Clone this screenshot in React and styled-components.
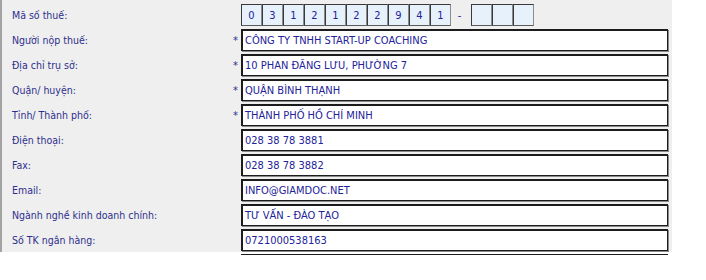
import React from "react";
import styled, { createGlobalStyle } from "styled-components";

const GlobalStyle = createGlobalStyle`
  body {
    margin: 0;
    background: #ffffff;
    font-family: "DejaVu Sans Condensed", "Liberation Sans", Arial, sans-serif;
  }
`;

const fields = [
  { label: "Người nộp thuế:", value: "CÔNG TY TNHH START-UP COACHING", required: true },
  { label: "Địa chỉ trụ sở:", value: "10 PHAN ĐĂNG LƯU, PHƯỜNG 7", required: true },
  { label: "Quận/ huyện:", value: "QUẬN BÌNH THẠNH", required: true },
  { label: "Tỉnh/ Thành phố:", value: "THÀNH PHỐ HỒ CHÍ MINH", required: true },
  { label: "Điện thoại:", value: "028 38 78 3881" },
  { label: "Fax:", value: "028 38 78 3882" },
  { label: "Email:", value: "INFO@GIAMDOC.NET" },
  { label: "Ngành nghề kinh doanh chính:", value: "TƯ VẤN - ĐÀO TẠO" },
  { label: "Số TK ngân hàng:", value: "0721000538163" },
];

const taxDigits = ["0", "3", "1", "2", "1", "2", "2", "9", "4", "1"];

//Layout components
const Viewport = styled.div`
  width: 706px;
  height: 255px;
  overflow: hidden;
`;

const Panel = styled.div`
  width: 660px;
  padding: 4px 0 1px 10px;
  background: #efefef;
  border-left: 2px solid #a3a3a3;
  display: flex;
  flex-direction: column;
  gap: 3px;
`;

const Row = styled.div`
  display: grid;
  grid-template-columns: 221px 8px 428px;
  align-items: center;
  height: 22px;
`;

const Label = styled.div`
  font-size: 10.5px;
  color: #2e2e8c;
  white-space: nowrap;
`;

const Star = styled.div`
  font-size: 11px;
  color: #2e2e8c;
`;

const Field = styled.div`
  box-sizing: border-box;
  height: 22px;
  background: #ffffff;
  border: 1px solid #1c1c1c;
  border-width: 2px 1px 1px 2px;
  box-shadow: 1px 1px 0 #8a8a8a;
  width: 427px;
  padding: 0 2px;
  display: flex;
  align-items: center;
  font-size: 11px;
  color: #22229a;
  white-space: nowrap;
  overflow: hidden;
`;

const TaxCode = styled.div`
  display: flex;
  align-items: center;
`;

const DigitBox = styled.div`
  box-sizing: border-box;
  width: 21px;
  height: 22px;
  background: #e7f1fc;
  border: 1px solid #3a3a3a;
  border-right-color: #8c8c8c;
  border-bottom-color: #5a5a5a;
  display: flex;
  align-items: center;
  justify-content: center;
  font-size: 11px;
  color: #22229a;
`;

const Dash = styled.div`
  width: 20px;
  text-align: center;
  font-size: 11px;
  color: #22229a;
  padding-right: 3px;
  box-sizing: border-box;
`;

const TailRow = styled(Row)`
  padding-left: 12px;
  margin-top: 2px;
`;

function App() {
  return (
    <>
      <GlobalStyle />
      <Viewport>
        <Panel>
          <Row>
            <Label>Mã số thuế:</Label>
            <Star />
            <TaxCode>
              {taxDigits.map((d, i) => (
                <DigitBox key={i}>{d}</DigitBox>
              ))}
              <Dash>-</Dash>
              <DigitBox />
              <DigitBox />
              <DigitBox />
            </TaxCode>
          </Row>
          {fields.map((f) => (
            <Row key={f.label}>
              <Label>{f.label}</Label>
              <Star>{f.required ? "*" : ""}</Star>
              <Field>{f.value}</Field>
            </Row>
          ))}
        </Panel>
        <TailRow>
          <div />
          <div />
          <Field />
        </TailRow>
      </Viewport>
    </>
  );
}

export default App;
